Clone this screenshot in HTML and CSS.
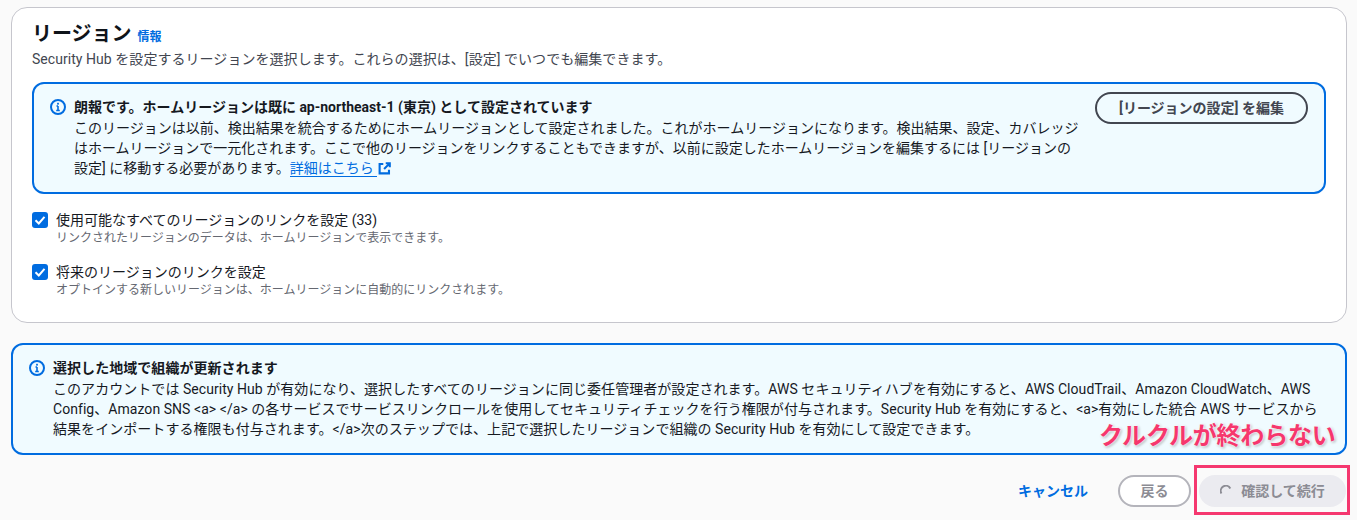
FILE: index.html
```html
<!DOCTYPE html>
<html lang="ja">
<head>
<meta charset="utf-8">
<title>リージョン</title>
<link rel="stylesheet" href="styles.css">
</head>
<body>
<div class="page">
  <section class="card">
    <header class="card-head">
      <h2 class="title">リージョン<a class="info-link">情報</a></h2>
      <p class="desc">Security Hub を設定するリージョンを選択します。これらの選択は、[設定] でいつでも編集できます。</p>
    </header>
    <div class="alert alert-inner">
      <svg class="alert-icon" viewBox="0 0 16 16"><circle cx="8" cy="8" r="7" fill="none" stroke="#006ce0" stroke-width="2"/><path d="M8 7v4.5M6.2 11.5h3.6M6.5 7H8" fill="none" stroke="#006ce0" stroke-width="1.6"/><rect x="7.1" y="3.8" width="1.8" height="1.8" fill="#006ce0"/></svg>
      <div class="alert-body">
        <div class="alert-title">朗報です。ホームリージョンは既に ap-northeast-1 (東京) として設定されています</div>
        <div class="alert-text">このリージョンは以前、検出結果を統合するためにホームリージョンとして設定されました。これがホームリージョンになります。検出結果、設定、カバレッジはホームリージョンで一元化されます。ここで他のリージョンをリンクすることもできますが、以前に設定したホームリージョンを編集するには [リージョンの設定] に移動する必要があります。<a class="ext-link">詳細はこちら </a><svg class="ext-icon" viewBox="0 0 16 16"><path d="M6.5 2.5H2v11.5h11.5V9.5M9.5 1.5h5v5M14 2L7.5 8.5" fill="none" stroke="#006ce0" stroke-width="2.6"/></svg></div>
      </div>
      <button class="btn-outline">[リージョンの設定] を編集</button>
    </div>
    <div class="checks">
      <div class="check">
        <svg class="box" viewBox="0 0 16 16"><rect width="16" height="16" rx="3" fill="#006ce0"/><path d="M3.5 8.2L6.8 11.5L12.5 4.8" fill="none" stroke="#fff" stroke-width="2"/></svg>
        <div>
          <div class="check-label">使用可能なすべてのリージョンのリンクを設定 (33)</div>
          <div class="check-hint">リンクされたリージョンのデータは、ホームリージョンで表示できます。</div>
        </div>
      </div>
      <div class="check">
        <svg class="box" viewBox="0 0 16 16"><rect width="16" height="16" rx="3" fill="#006ce0"/><path d="M3.5 8.2L6.8 11.5L12.5 4.8" fill="none" stroke="#fff" stroke-width="2"/></svg>
        <div>
          <div class="check-label">将来のリージョンのリンクを設定</div>
          <div class="check-hint">オプトインする新しいリージョンは、ホームリージョンに自動的にリンクされます。</div>
        </div>
      </div>
    </div>
  </section>
  <div class="alert alert-outer">
    <svg class="alert-icon" viewBox="0 0 16 16"><circle cx="8" cy="8" r="7" fill="none" stroke="#006ce0" stroke-width="2"/><path d="M8 7v4.5M6.2 11.5h3.6M6.5 7H8" fill="none" stroke="#006ce0" stroke-width="1.6"/><rect x="7.1" y="3.8" width="1.8" height="1.8" fill="#006ce0"/></svg>
    <div class="alert-body">
      <div class="alert-title">選択した地域で組織が更新されます</div>
      <div class="alert-text">このアカウントでは Security Hub が有効になり、選択したすべてのリージョンに同じ委任管理者が設定されます。AWS セキュリティハブを有効にすると、AWS CloudTrail、Amazon CloudWatch、AWS Config、Amazon SNS &lt;a&gt; &lt;/a&gt; の各サービスでサービスリンクロールを使用してセキュリティチェックを行う権限が付与されます。Security Hub を有効にすると、&lt;a&gt;有効にした統合 AWS サービスから結果をインポートする権限も付与されます。&lt;/a&gt;次のステップでは、上記で選択したリージョンで組織の Security Hub を有効にして設定できます。</div>
    </div>
  </div>
  <footer class="actions">
    <a class="cancel">キャンセル</a>
    <button class="btn-back">戻る</button>
    <button class="btn-primary"><svg class="spinner" viewBox="0 0 12 12"><path d="M1.4 8.4A5 5 0 0 1 10.3 3.4" fill="none" stroke="#8c8c94" stroke-width="2"/></svg>確認して続行</button>
  </footer>
  <div class="callout-text">クルクルが終わらない</div>
  <div class="callout-box"></div>
</div>
</body>
</html>
```
FILE: styles.css
```css
* { box-sizing: border-box; }
html, body { margin: 0; padding: 0; height: 520px; overflow: hidden; }
body {
  background: #fafafa;
  color: #16191f;
  font-family: Roboto, "Noto Sans CJK JP", sans-serif;
  font-size: 14px;
  line-height: 20px;
}
.page { position: relative; padding: 7px 10px 0 11px; height: 520px; }
.card {
  background: #fff;
  border: 1px solid #c6c6cd;
  border-radius: 16px;
  height: 316px;
  padding: 12px 20px 0;
}
.title { margin: 0; font-size: 20px; line-height: 28px; font-weight: 700; color: #0f141a; }
.info-link { margin-left: 6px; font-size: 12px; font-weight: 700; color: #006ce0; }
.desc { margin: -2px 0 0; color: #424650; font-size: 14px; line-height: 20px; letter-spacing: .05px; }
.alert {
  display: flex;
  background: #f0fbff;
  border: 2px solid #006ce0;
  border-radius: 12px;
}
.alert-inner { margin-top: 13px; height: 112px; padding: 13px 16px 0 16px; }
.alert-outer { margin-top: 20px; height: 112px; padding: 13px 16px 0 16px; letter-spacing: .05px; }
.alert-icon { flex: none; width: 16px; height: 16px; margin: 2px 8px 0 0; }
.alert-body { flex: 1; min-width: 0; }
.alert-title { font-weight: 700; line-height: 20px; }
.alert-text { margin-top: 1px; line-height: 20px; }
.ext-link { color: #006ce0; border-bottom: 1px solid #006ce0; }
.ext-icon { width: 13px; height: 13px; margin-left: 1px; vertical-align: -2px; }
.btn-outline {
  flex: none;
  width: 213px;
  height: 32px;
  margin: -5px 0 0 16px;
  background: transparent;
  border: 2px solid #424650;
  border-radius: 16px;
  color: #424650;
  font: 700 14px/20px Roboto, "Noto Sans CJK JP", sans-serif;
  padding: 0;
}
.checks { display: flex; flex-direction: column; gap: 16px; margin-top: 16px; }
.check { display: flex; gap: 8px; }
.box { flex: none; width: 16px; height: 16px; margin-top: 2px; }
.check-label { line-height: 20px; }
.check-hint { font-size: 12px; line-height: 16px; color: #656871; }
.actions {
  display: flex;
  justify-content: flex-end;
  align-items: center;
  margin-top: 20px;
  padding-right: 1px;
}
.cancel { color: #006ce0; font-weight: 700; margin-right: 30px; }
.btn-back {
  width: 73px;
  height: 32px;
  margin-right: 8px;
  background: #fff;
  border: 2px solid #b4b4bb;
  border-radius: 16px;
  color: #8c8c94;
  font: 700 14px/20px Roboto, "Noto Sans CJK JP", sans-serif;
  padding: 0;
}
.btn-primary {
  display: flex;
  align-items: center;
  justify-content: center;
  gap: 9px;
  width: 147px;
  height: 32px;
  background: #ebebf0;
  border: 0;
  border-radius: 16px;
  color: #8c8c94;
  font: 700 14px/20px Roboto, "Noto Sans CJK JP", sans-serif;
  padding: 0;
}
.spinner { width: 12px; height: 12px; }
.callout-text {
  position: absolute;
  left: 1099px;
  top: 420px;
  font-size: 24px;
  line-height: 32px;
  font-weight: 700;
  color: #f6376d;
  letter-spacing: -0.2px;
  text-shadow: 0 0 3px #fff, 0 0 3px #fff, 1px 1px 3px rgba(0,0,0,.45);
}
.callout-box {
  position: absolute;
  left: 1194px;
  top: 465px;
  width: 156px;
  height: 50px;
  border: 3px solid #f5376f;
}
```
